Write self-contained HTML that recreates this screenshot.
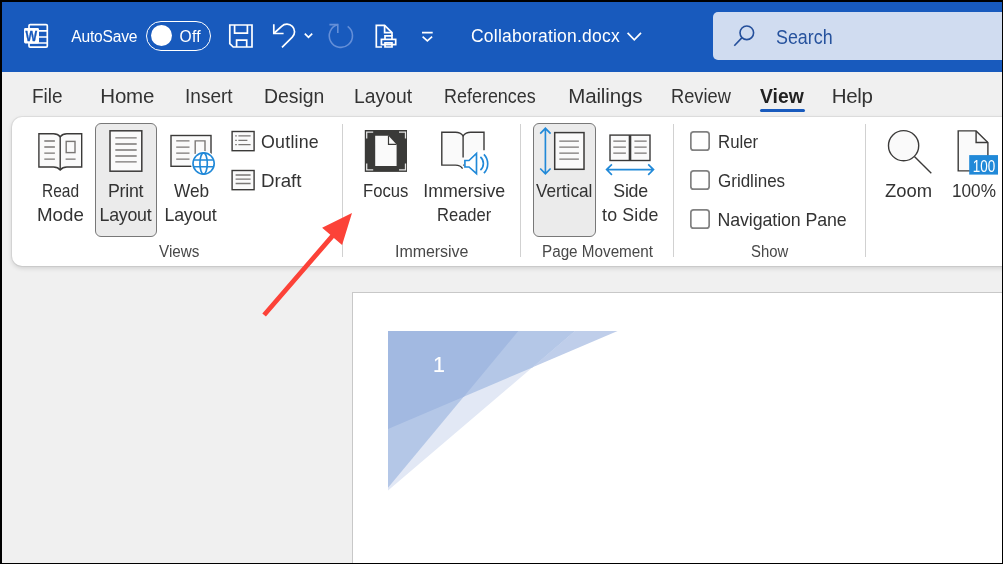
<!DOCTYPE html>
<html lang="en"><head><meta charset="utf-8"><title>Collaboration.docx - Word</title>
<style>
html,body{margin:0;padding:0}
body{width:1003px;height:564px;overflow:hidden;background:#000;position:relative;font-family:"Liberation Sans",sans-serif}
.win{position:absolute;left:2px;top:2px;width:1000px;height:561px;background:#f0f0f0;overflow:hidden}
.titlebar{position:absolute;left:0;top:0;width:100%;height:70px;background:#185abd}
.tabs{position:absolute;left:0;top:70px;width:100%;height:45px;background:#f0f0f0}
.ribbon{position:absolute;left:9.5px;top:114.8px;width:1010px;height:149.2px;background:#fff;border-radius:10px;box-shadow:0 2px 5px rgba(0,0,0,.15),0 0 0 1px rgba(0,0,0,.055)}
.sep{position:absolute;top:7.2px;width:1px;height:133px;background:#d1d1d1}
.selbtn{position:absolute;box-sizing:border-box;border:1px solid #787878;border-radius:6px;background:#ebebeb}
.cb{position:absolute;box-sizing:border-box;width:19.5px;height:19.7px;border-radius:3.6px;background:#fff;box-shadow:inset 0 0 0 1.7px #828282}
.search{position:absolute;left:711px;top:10px;width:300px;height:48px;border-radius:5px;background:#d0dcf0}
.toggle{position:absolute;left:144px;top:19px;width:65px;height:30px;box-sizing:border-box;border:1.3px solid #fff;border-radius:15px}
.knob{position:absolute;left:148.6px;top:23.3px;width:21.2px;height:21.2px;border-radius:50%;background:#fff}
.tabline{position:absolute;left:758px;top:107px;width:45px;height:3px;border-radius:1.5px;background:#185abd}
.page{position:absolute;left:350px;top:290px;width:700px;height:300px;background:#fff;border:1px solid #c8c8c8}
.tx{position:absolute;white-space:nowrap;transform-origin:0 0}
svg.icons{position:absolute;left:-2px;top:-2px;overflow:visible;will-change:transform}
.texts{position:absolute;left:-2px;top:-2px;width:1003px;height:564px;will-change:transform}
.one{-webkit-text-stroke:.15px #fff}

</style></head>
<body>
<div class="win">
  <div class="titlebar"></div>
  <div class="tabs"></div>
  <div class="search"></div>
  <div class="toggle"></div><div class="knob"></div>
  <div class="tabline"></div>
  <div class="ribbon">
    <div class="sep" style="left:330.5px"></div>
    <div class="sep" style="left:508.5px"></div>
    <div class="sep" style="left:661.5px"></div>
    <div class="sep" style="left:853.5px"></div>
  </div>
  <div class="selbtn" style="left:93px;top:121px;width:62px;height:114px"></div>
  <div class="selbtn" style="left:531px;top:121px;width:63px;height:114px"></div>
  <div class="cb" style="left:688.3px;top:129.1px"></div>
  <div class="cb" style="left:688.3px;top:168.2px"></div>
  <div class="cb" style="left:688.3px;top:207.3px"></div>
  <div class="page"></div>
  <svg class="icons" width="1003" height="564" viewBox="0 0 1003 564" fill="none" stroke-linecap="butt" stroke-linejoin="miter">
  <!-- ===== title bar icons (white) ===== -->
  <g stroke="#fff" stroke-width="1.7">
    <!-- Word logo -->
    <rect x="29" y="24.6" width="18.3" height="22.6" rx="1.2"/>
    <path d="M38.5,30.8H47 M38.5,37H47 M30,43H47"/>
    <rect x="24" y="28" width="15" height="15.4" rx="1.4" fill="#fff" stroke="none"/>
  </g>
  <text x="31.4" y="40.8" font-family="Liberation Sans, sans-serif" font-weight="700" font-size="14.6" fill="#185abd" stroke="#185abd" stroke-width=".3" text-anchor="middle" textLength="11.6" lengthAdjust="spacingAndGlyphs">W</text>
  <g stroke="#fff" stroke-width="1.7">
    <!-- save -->
    <path d="M229.8,25H252V47H233.2L229.8,43.6Z"/>
    <path d="M234.6,25V33.1H247.4V25 M236.6,47V40.2H246.7V47"/>
    <!-- undo -->
    <path d="M273.8,24.3V33.5H283.6"/>
    <path d="M274.3,33 L281.6,26.4 A7.6,7.6 0 0 1 292.3,37.2 L282,47.4"/>
    <path d="M304.8,33.6L308.5,37.3L312.2,33.6"/>
    <!-- print preview -->
    <path d="M382,47H376.3V25.3H384.6L392,32.6V36"/>
    <path d="M384.6,25.3V32.6H392"/>
    <rect x="381.4" y="39.4" width="14.3" height="5.2"/>
    <path d="M385,39.4V35.9H392V39.4 M385,42.8H392V47H385Z"/>
    <!-- customize QAT -->
    <path d="M422,32.7H432.7 M422.6,36.6L427.35,40.8L432.1,36.6"/>
    <!-- filename chevron -->
    <path d="M627.6,32.8L634.3,39.8L641,32.8"/>
  </g>
  <!-- redo (disabled) -->
  <g stroke="#648fd8" stroke-width="1.6">
    <path d="M347.7,26.4A11.6,11.6 0 1 1 337.8,24.6"/>
    <path d="M329.4,24.6H337.8V33"/>
  </g>
  <!-- search icon -->
  <g stroke="#244f9b" stroke-width="1.6">
    <circle cx="746.8" cy="32.8" r="6.8"/>
    <path d="M742,37.6L734.3,45.8"/>
  </g>

  <!-- ===== ribbon icons ===== -->
  <!-- Read Mode -->
  <g stroke="#3b3a39" stroke-width="1.4" fill="#fafafa">
    <path d="M60.2,170 C58.6,168 56.6,167 53.5,167 H38.9 V133.8 H53.5 C56.6,133.8 58.6,134.8 60.2,136.8 C61.8,134.8 63.8,133.8 66.9,133.8 H81.7 V167 H66.9 C63.8,167 61.8,168 60.2,170 Z"/>
    <path d="M60.2,136.8V170"/>
  </g>
  <g stroke="#7a7775" stroke-width="1.4">
    <path d="M44.3,141H54.9 M44.3,147H54.9 M44.3,153.1H54.9 M44.3,159.1H54.9 M65.6,159.1H75.6"/>
    <rect x="66.2" y="141.4" width="8.8" height="11.2"/>
  </g>
  <!-- Print Layout -->
  <rect x="110" y="130.8" width="31.8" height="40.4" stroke="#3b3a39" stroke-width="1.5" fill="#fafafa"/>
  <path stroke="#7a7775" stroke-width="1.4" d="M115.3,137.9H136.7 M115.3,144H136.7 M115.3,150H136.7 M115.3,156H136.7 M115.3,161.9H136.7"/>
  <!-- Web Layout -->
  <rect x="171" y="135.5" width="40" height="30.8" stroke="#3b3a39" stroke-width="1.4" fill="#fafafa"/>
  <path stroke="#7a7775" stroke-width="1.4" d="M176.2,140.9H189.5 M176.2,147.1H189.5 M176.2,153.1H189.5 M176.2,159.1H189.5 M195.2,154V140.9H205V154"/>
  <circle cx="203.6" cy="163.5" r="12.6" fill="#fff"/>
  <g stroke="#2189d8" stroke-width="1.65">
    <circle cx="203.6" cy="163.5" r="10.6" fill="#fff"/>
    <ellipse cx="203.6" cy="163.5" rx="3.7" ry="10.6"/>
    <path d="M193.6,160H213.6 M193.6,166.7H213.6"/>
  </g>
  <!-- Outline -->
  <rect x="232.1" y="131.5" width="22" height="19.2" stroke="#3b3a39" stroke-width="1.4" fill="#fafafa"/>
  <path stroke="#7a7775" stroke-width="1.3" d="M235.2,135.9H236.8 M238.4,135.9H250.6 M235.2,140.3H236.8 M238.4,140.3H247.4 M235.2,144.6H236.8 M238.4,144.6H250.6"/>
  <!-- Draft -->
  <rect x="232.1" y="170.5" width="22" height="19.2" stroke="#3b3a39" stroke-width="1.4" fill="#fafafa"/>
  <path stroke="#7a7775" stroke-width="1.3" d="M235.6,175H250.6 M235.6,179.2H250.6 M235.6,183.5H250.6"/>
  <!-- Focus -->
  <rect x="364.8" y="130" width="42.2" height="41.9" fill="#3a3a38"/>
  <path stroke="#e4e4e4" stroke-width="1.3" d="M366.7,138.6V132.2H373.2 M399,132.2H405.5V138.6 M366.7,163.4V169.8H373.2 M399,169.8H405.5V163.4"/>
  <path fill="#fafafa" d="M375.2,135.7H388.5L396.6,144.4V166.1H375.2Z"/>
  <path stroke="#3a3a38" stroke-width="1.2" d="M388.5,135.7V144.4H396.6"/>
  <!-- Immersive Reader -->
  <g stroke="#3b3a39" stroke-width="1.4" fill="#fafafa">
    <path d="M462.6,168.6 C461,166 459,165.1 455.5,165.1 H441.8 V132.2 H455.5 C459,132.2 461.2,133.2 463.1,135.8 C465,133.2 467.2,132.2 470.7,132.2 H484 V165.1 H463.1"/>
    <path d="M463.1,135.8V157.4"/>
  </g>
  <path d="M463.9,158.3H468.2L475,151.8L479,150.2H490V176H475.5L468.2,169.2H463.9Z" fill="#fff"/>
  <g stroke="#2189d8" stroke-width="1.65">
    <path d="M464.9,160.5H469L476.5,153.4V173.6L469,167H464.9Z" fill="#fff"/>
    <path d="M480.4,156.9C484.4,160.5 484.4,166.5 480.4,170.2 M483.9,154.3C489,159.5 489,168 483.9,173.2"/>
  </g>
  <!-- Vertical -->
  <g stroke="#2189d8" stroke-width="1.65">
    <path d="M545.4,128.3V173.8 M540.2,133.6L545.4,128.3L550.6,133.6 M540.2,168.5L545.4,173.8L550.6,168.5"/>
  </g>
  <rect x="554.7" y="132.6" width="29.3" height="36.7" stroke="#3b3a39" stroke-width="1.5" fill="#fafafa"/>
  <path stroke="#7a7775" stroke-width="1.4" d="M559.3,141.1H578.9 M559.3,147.1H578.9 M559.3,153.1H578.9 M559.3,159.1H578.9"/>
  <!-- Side to Side -->
  <rect x="610" y="135.1" width="40" height="25.4" stroke="#3b3a39" stroke-width="1.4" fill="#fafafa"/>
  <path stroke="#3b3a39" stroke-width="2.6" d="M630,135.1V160.5"/>
  <path stroke="#7a7775" stroke-width="1.4" d="M613.3,141.1H625.9 M613.3,147.1H625.9 M613.3,153.1H625.9 M634.4,141.1H646.7 M634.4,147.1H646.7 M634.4,153.1H646.7"/>
  <g stroke="#2189d8" stroke-width="1.65">
    <path d="M606.6,169.6H653.5 M611.9,164.4L606.6,169.6L611.9,174.8 M648.2,164.4L653.5,169.6L648.2,174.8"/>
  </g>
  <!-- Zoom -->
  <circle cx="903.6" cy="145.7" r="15.1" stroke="#3b3a39" stroke-width="1.4" fill="#fafafa"/>
  <path stroke="#3b3a39" stroke-width="1.4" d="M914.4,156.5L931.3,173.3"/>
  <!-- 100% -->
  <path d="M970,170.9H958.2V130.9H976.1L987.9,142.5V156" stroke="#3b3a39" stroke-width="1.4" fill="#fafafa"/>
  <path d="M976.1,130.9V142.5H987.9" stroke="#3b3a39" stroke-width="1.4"/>
  <rect x="969.2" y="155.1" width="28.8" height="19.5" fill="#2189d8"/>
  <text x="984" y="171.5" font-family="Liberation Sans, sans-serif" font-size="17" fill="#fff" text-anchor="middle" textLength="22.5" lengthAdjust="spacingAndGlyphs">100</text>

  <!-- ===== document header graphic ===== -->
  <path d="M388,331.1H617.6L388,429Z" fill="#bfceea"/>
  <path d="M388,331.1H575L388,490.6Z" fill="#e2e8f5"/>
  <path d="M388,331.1H575L532.4,367.4L388,429Z" fill="#b4c7e7"/>
  <path d="M388,331.1H518.3L388,487.8Z" fill="#b4c7e7"/>
  <path d="M388,331.1H518.3L463.8,396.7L388,429Z" fill="#a2b9e1"/>

  <!-- ===== red annotation arrow ===== -->
  <path d="M262.3,313.4L330.3,234.8L322.1,227.7L352,212.9L342.1,245L333.9,237.9L265.9,316.6Z" fill="#fc4238"/>
</svg>

  <div class="texts">
<span class="tx" style="left:71.30px;top:26.90px;font-size:15.6px;line-height:20px;color:#fff;letter-spacing:-0.200px">AutoSave</span>
<span class="tx" style="left:179.55px;top:26.90px;font-size:15.6px;line-height:20px;color:#fff;letter-spacing:0.225px">Off</span>
<span class="tx" style="left:471.00px;top:25.20px;font-size:17.5px;line-height:23px;color:#fff;letter-spacing:0.221px">Collaboration.docx</span>
<span class="tx" style="left:776.03px;top:23.20px;font-size:20.5px;line-height:27px;color:#26529d;transform:scaleX(0.8717)">Search</span>
<span class="tx" style="left:31.88px;top:81.70px;font-size:20.5px;line-height:27px;color:#333333;transform:scaleX(0.9256)">File</span>
<span class="tx" style="left:100.25px;top:81.70px;font-size:20.5px;line-height:27px;color:#333333;letter-spacing:-0.167px">Home</span>
<span class="tx" style="left:184.64px;top:81.70px;font-size:20.5px;line-height:27px;color:#333333;transform:scaleX(0.9286)">Insert</span>
<span class="tx" style="left:264.34px;top:81.70px;font-size:20.5px;line-height:27px;color:#333333;transform:scaleX(0.9465)">Design</span>
<span class="tx" style="left:354.35px;top:81.70px;font-size:20.5px;line-height:27px;color:#333333;transform:scaleX(0.9423)">Layout</span>
<span class="tx" style="left:444.47px;top:81.70px;font-size:20.5px;line-height:27px;color:#333333;transform:scaleX(0.8753)">References</span>
<span class="tx" style="left:568.25px;top:81.70px;font-size:20.5px;line-height:27px;color:#333333;letter-spacing:-0.150px">Mailings</span>
<span class="tx" style="left:671.44px;top:81.70px;font-size:20.5px;line-height:27px;color:#333333;transform:scaleX(0.8901)">Review</span>
<span class="tx" style="left:760.46px;top:81.70px;font-size:20.5px;line-height:27px;color:#222;transform:scaleX(0.9435);font-weight:700">View</span>
<span class="tx" style="left:831.75px;top:81.70px;font-size:20.5px;line-height:27px;color:#333333;letter-spacing:-0.333px">Help</span>
<span class="tx" style="left:41.69px;top:179.60px;font-size:17.8px;line-height:23px;color:#333333;transform:scaleX(0.8730)">Read</span>
<span class="tx" style="left:37.42px;top:203.60px;font-size:17.8px;line-height:23px;color:#333333;transform:scaleX(1.0533)">Mode</span>
<span class="tx" style="left:107.90px;top:179.60px;font-size:17.8px;line-height:23px;color:#333333;letter-spacing:-0.225px">Print</span>
<span class="tx" style="left:99.50px;top:203.60px;font-size:17.8px;line-height:23px;color:#333333;letter-spacing:-0.250px">Layout</span>
<span class="tx" style="left:173.50px;top:179.60px;font-size:17.8px;line-height:23px;color:#333333;transform:scaleX(0.9690)">Web</span>
<span class="tx" style="left:164.50px;top:203.60px;font-size:17.8px;line-height:23px;color:#333333;letter-spacing:-0.250px">Layout</span>
<span class="tx" style="left:261.05px;top:131.00px;font-size:17.8px;line-height:23px;color:#333333;letter-spacing:0.225px">Outline</span>
<span class="tx" style="left:260.92px;top:169.60px;font-size:17.8px;line-height:23px;color:#333333;transform:scaleX(1.0514)">Draft</span>
<span class="tx" style="left:362.80px;top:179.60px;font-size:17.8px;line-height:23px;color:#333333;transform:scaleX(0.9362)">Focus</span>
<span class="tx" style="left:423.25px;top:179.60px;font-size:17.8px;line-height:23px;color:#333333">Immersive</span>
<span class="tx" style="left:436.80px;top:203.60px;font-size:17.8px;line-height:23px;color:#333333;transform:scaleX(0.9310)">Reader</span>
<span class="tx" style="left:535.80px;top:179.60px;font-size:17.8px;line-height:23px;color:#333333;transform:scaleX(0.9677)">Vertical</span>
<span class="tx" style="left:613.25px;top:179.60px;font-size:17.8px;line-height:23px;color:#333333;letter-spacing:-0.233px">Side</span>
<span class="tx" style="left:602.05px;top:203.60px;font-size:17.8px;line-height:23px;color:#333333;letter-spacing:0.158px">to Side</span>
<span class="tx" style="left:717.58px;top:131.00px;font-size:17.8px;line-height:23px;color:#333333;transform:scaleX(0.9448)">Ruler</span>
<span class="tx" style="left:718.04px;top:169.60px;font-size:17.8px;line-height:23px;color:#333333;transform:scaleX(0.9562)">Gridlines</span>
<span class="tx" style="left:717.50px;top:208.50px;font-size:17.8px;line-height:23px;color:#333333;letter-spacing:-0.089px">Navigation Pane</span>
<span class="tx" style="left:884.68px;top:179.60px;font-size:17.8px;line-height:23px;color:#333333;transform:scaleX(1.0354)">Zoom</span>
<span class="tx" style="left:951.79px;top:179.60px;font-size:17.8px;line-height:23px;color:#333333;transform:scaleX(0.9655)">100%</span>
<span class="tx" style="left:159.30px;top:241.00px;font-size:16px;line-height:21px;color:#484848;transform:scaleX(0.9533)">Views</span>
<span class="tx" style="left:395.00px;top:241.00px;font-size:16px;line-height:21px;color:#484848;letter-spacing:-0.062px">Immersive</span>
<span class="tx" style="left:541.51px;top:241.00px;font-size:16px;line-height:21px;color:#484848;transform:scaleX(0.9527)">Page Movement</span>
<span class="tx" style="left:751.00px;top:241.00px;font-size:16px;line-height:21px;color:#484848;transform:scaleX(0.9299)">Show</span>
<span class="tx one" style="left:433.05px;top:351.20px;font-size:21.5px;line-height:28px;color:#fff">1</span>
  </div>
</div>

</body></html>
